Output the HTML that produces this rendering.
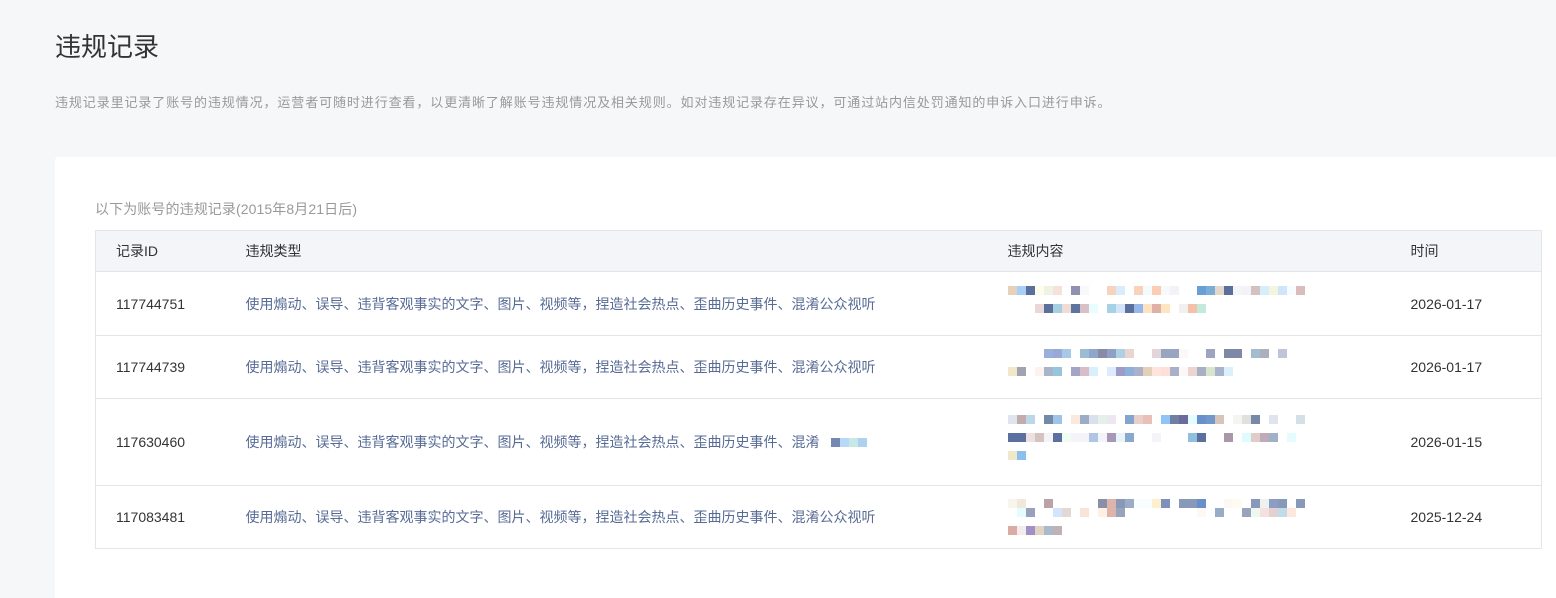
<!DOCTYPE html>
<html><head><meta charset="utf-8"><style>
*{margin:0;padding:0;box-sizing:border-box}
body{width:1556px;height:598px;background:#f6f7f9;font-family:"Liberation Sans","Noto Sans CJK SC",sans-serif;position:relative;overflow:hidden;color:#333}
h1{position:absolute;left:55px;top:27px;font-size:26px;font-weight:normal;color:#333}
.desc{position:absolute;left:55px;top:92px;font-size:13px;color:#999;letter-spacing:0.9px;white-space:nowrap}
.card{position:absolute;left:55px;top:157px;right:0;bottom:0;background:#fff;border-radius:3px 0 0 0}
.cap{position:absolute;left:95px;top:199px;font-size:14px;color:#999;letter-spacing:0.1px}
table{position:absolute;left:95px;top:230px;width:1447px;border-collapse:collapse;font-size:14px}
td,th{border-top:1px solid #e5e5e5;text-align:left;font-weight:normal;vertical-align:middle;padding:0}
table{border:1px solid #e5e5e5}
th{background:#f4f5f8;height:41px;color:#333}
.c1{padding-left:20px;width:150px}
.c2{padding-left:0;width:762px}
.c3{width:403px}
.t{color:#576b95}
.m{position:relative}
.m span{display:inline-block;width:9px;height:9px;vertical-align:top}
.r{height:9px;white-space:nowrap;margin-bottom:9px;font-size:0}
</style></head><body>
<h1>违规记录</h1>
<div class="desc">违规记录里记录了账号的违规情况，运营者可随时进行查看，以更清晰了解账号违规情况及相关规则。如对违规记录存在异议，可通过站内信处罚通知的申诉入口进行申诉。</div>
<div class="card"></div>
<div class="cap">以下为账号的违规记录(2015年8月21日后)</div>
<table>
<tr><th class="c1">记录ID</th><th class="c2">违规类型</th><th class="c3">违规内容</th><th>时间</th></tr>
<tr style="height:64px"><td class="c1">117744751</td><td class="t">使用煽动、误导、违背客观事实的文字、图片、视频等，捏造社会热点、歪曲历史事件、混淆公众视听</td>
<td><div class="m"><div class="r"><span style="background:#e6d2bb"></span><span style="background:#a8cff8"></span><span style="background:#5a6f9c"></span><span style="background:#fdfdea"></span><span style="background:#f1f2e6"></span><span style="background:#f5e2da"></span><span></span><span style="background:#9090b0"></span><span style="background:#f7f9fb"></span><span></span><span></span><span style="background:#f6d3bf"></span><span style="background:#d8ecfc"></span><span></span><span style="background:#f8d3ba"></span><span style="background:#f5fbfd"></span><span style="background:#fccdb4"></span><span style="background:#f7fafd"></span><span style="background:#f2f3f8"></span><span></span><span></span><span style="background:#68a0d5"></span><span style="background:#7aaed6"></span><span style="background:#e4d8cd"></span><span style="background:#5a6f9c"></span><span style="background:#f5f4f8"></span><span style="background:#f3f2f7"></span><span style="background:#d4c0c0"></span><span style="background:#d6eefc"></span><span style="background:#f4f5df"></span><span style="background:#d0e4fc"></span><span style="background:#f5fdfe"></span><span style="background:#d9bcbc"></span></div>
<div class="r" style="padding-left:27px"><span style="background:#ead8d8"></span><span style="background:#5a6f9c"></span><span style="background:#a6cfe0"></span><span style="background:#f0dcd6"></span><span style="background:#5e74a0"></span><span style="background:#d9bfc6"></span><span style="background:#e8fdfe"></span><span></span><span style="background:#a7d2e6"></span><span style="background:#d2e5f8"></span><span style="background:#5a6f9c"></span><span style="background:#95b7ea"></span><span style="background:#fde3c3"></span><span style="background:#dfb1a6"></span><span style="background:#fee4c0"></span><span></span><span style="background:#f0f0f0"></span><span style="background:#f4c0a8"></span><span style="background:#c2ebdc"></span></div></div></td><td>2026-01-17</td></tr>
<tr style="height:63px"><td class="c1">117744739</td><td class="t">使用煽动、误导、违背客观事实的文字、图片、视频等，捏造社会热点、歪曲历史事件、混淆公众视听</td>
<td><div class="m"><div class="r" style="padding-left:36px"><span style="background:#9ab0dc"></span><span style="background:#9aa8d8"></span><span style="background:#a8c8e8"></span><span></span><span style="background:#9cbcd4"></span><span style="background:#8ea6cc"></span><span style="background:#8a8aa8"></span><span style="background:#90a0c4"></span><span style="background:#aed0e4"></span><span style="background:#ead4d0"></span><span></span><span></span><span style="background:#e4d4dc"></span><span style="background:#98a4c0"></span><span style="background:#98a4c0"></span><span style="background:#fdf8f8"></span><span></span><span></span><span style="background:#9ca4c0"></span><span></span><span style="background:#8088a8"></span><span style="background:#8088a8"></span><span></span><span style="background:#a4bcd0"></span><span style="background:#aab0bc"></span><span></span><span style="background:#c0c4d8"></span></div>
<div class="r"><span style="background:#f0e8c8"></span><span style="background:#a0a4b0"></span><span></span><span style="background:#fef2ee"></span><span style="background:#a8b4cc"></span><span style="background:#98c4dc"></span><span></span><span style="background:#a4a4c4"></span><span style="background:#d8bcc8"></span><span style="background:#d8f0fc"></span><span></span><span style="background:#dcecfc"></span><span style="background:#9c9cc4"></span><span style="background:#8cb0d8"></span><span style="background:#acb0c8"></span><span style="background:#e4d0b8"></span><span style="background:#fee4dc"></span><span style="background:#fee0d8"></span><span style="background:#a8b0c8"></span><span style="background:#fdf8f8"></span><span style="background:#ecd4d0"></span><span style="background:#a8b0c8"></span><span style="background:#d8e4cc"></span><span style="background:#a8b4cc"></span><span style="background:#dcf0fc"></span></div></div></td><td>2026-01-17</td></tr>
<tr style="height:87px"><td class="c1">117630460</td><td class="t">使用煽动、误导、违背客观事实的文字、图片、视频等，捏造社会热点、歪曲历史事件、混淆 &nbsp;&nbsp;<span style="display:inline-block;width:36px;height:9px;background:linear-gradient(90deg,#7488b4 0 9px,#b8d8f8 9px 18px,#c8e8e8 18px 27px,#b0d0f0 27px)"></span></td>
<td><div class="m"><div class="r"><span style="background:#e0e4ec"></span><span style="background:#c4acac"></span><span style="background:#bcd8e8"></span><span></span><span style="background:#7488a8"></span><span style="background:#a0c4e8"></span><span></span><span style="background:#fde8e0"></span><span style="background:#9cacc4"></span><span style="background:#dce0ec"></span><span style="background:#e4f0e8"></span><span style="background:#ece8f0"></span><span></span><span style="background:#84a4d0"></span><span style="background:#e8d0c8"></span><span style="background:#e8c0b8"></span><span></span><span style="background:#90c4f8"></span><span style="background:#7080a0"></span><span style="background:#6c6c9c"></span><span style="background:#e4fcfe"></span><span style="background:#6890cc"></span><span style="background:#7098cc"></span><span style="background:#d8c4b8"></span><span></span><span style="background:#f4f4f0"></span><span style="background:#e0e0dc"></span><span style="background:#7888a8"></span><span></span><span style="background:#e0e4ec"></span><span></span><span></span><span style="background:#d4e0e8"></span></div>
<div class="r"><span style="background:#5c70a0"></span><span style="background:#5c70a0"></span><span style="background:#ece0e0"></span><span style="background:#d4c4c0"></span><span style="background:#f4f4f8"></span><span style="background:#5c70a0"></span><span style="background:#f0fcf4"></span><span style="background:#f4f4f8"></span><span style="background:#f4f4f8"></span><span style="background:#b0c4e4"></span><span style="background:#f4f4f8"></span><span style="background:#a898b8"></span><span style="background:#e8f4f8"></span><span style="background:#88a8d0"></span><span></span><span></span><span style="background:#f4f4f8"></span><span></span><span></span><span></span><span style="background:#90c0e0"></span><span style="background:#5c70a0"></span><span></span><span></span><span style="background:#a898a8"></span><span></span><span style="background:#dcfcfe"></span><span style="background:#e0ccc8"></span><span style="background:#c0aab8"></span><span style="background:#a0b0c8"></span><span></span><span style="background:#e4fcfe"></span></div>
<div class="r"><span style="background:#f0e8c8"></span><span style="background:#8cc0ec"></span></div></div></td><td>2026-01-15</td></tr>
<tr style="height:63px"><td class="c1">117083481</td><td class="t">使用煽动、误导、违背客观事实的文字、图片、视频等，捏造社会热点、歪曲历史事件、混淆公众视听</td>
<td><div class="m"><div class="r" style="margin-bottom:0"><span style="background:#f8f6ec"></span><span style="background:#f0e8dc"></span><span></span><span></span><span style="background:#b8a4a8"></span><span></span><span></span><span></span><span></span><span></span><span style="background:#8890a8"></span><span style="background:#dcb4ac"></span><span style="background:#8898b8"></span><span style="background:#9cacc4"></span><span style="background:#f8fefe"></span><span style="background:#f8fefe"></span><span style="background:#fef0cc"></span><span style="background:#8090bc"></span><span></span><span style="background:#8898b8"></span><span style="background:#8898b8"></span><span style="background:#6890c8"></span><span></span><span></span><span style="background:#fef8f4"></span><span style="background:#fefcf0"></span><span></span><span style="background:#8898b8"></span><span style="background:#eef2ee"></span><span style="background:#8c9cc4"></span><span style="background:#8898b8"></span><span></span><span style="background:#8898b8"></span></div>
<div class="r"><span></span><span style="background:#e4fcfe"></span><span style="background:#98a0bc"></span><span></span><span></span><span style="background:#d4e4fc"></span><span style="background:#e4d8d4"></span><span></span><span style="background:#f8e4d8"></span><span></span><span style="background:#fef0e4"></span><span style="background:#dcb4ac"></span><span style="background:#98a4bc"></span><span></span><span></span><span></span><span></span><span></span><span></span><span></span><span></span><span style="background:#fef8f4"></span><span></span><span style="background:#98acc8"></span><span></span><span></span><span style="background:#98a4bc"></span><span style="background:#eef8ee"></span><span style="background:#f4e0dc"></span><span style="background:#e4d0d0"></span><span style="background:#c0dce8"></span><span style="background:#fee8dc"></span></div>
<div class="r" style="margin-bottom:0"><span style="background:#d8aca4"></span><span style="background:#f4ecec"></span><span style="background:#a090c8"></span><span style="background:#e0d4c0"></span><span style="background:#acb8cc"></span><span style="background:#c0b0b8"></span></div></div></td><td>2025-12-24</td></tr>
</table>
</body></html>
